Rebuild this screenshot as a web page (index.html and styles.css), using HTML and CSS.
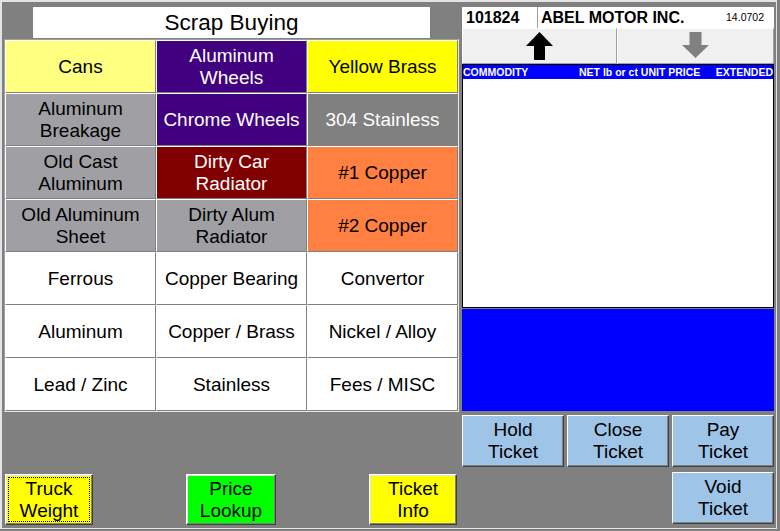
FILE: index.html
```html
<!DOCTYPE html>
<html>
<head>
<meta charset="utf-8">
<link rel="stylesheet" href="styles.css">
</head>
<body>
<div class="window">
  <div class="left">
    <div class="title">Scrap Buying</div>
    <div class="grid">
      <div class="cell c-lyellow">Cans</div>
      <div class="cell c-purple">Aluminum<br>Wheels</div>
      <div class="cell c-yellow">Yellow Brass</div>
      <div class="cell c-gray">Aluminum<br>Breakage</div>
      <div class="cell c-purple">Chrome Wheels</div>
      <div class="cell c-dgray">304 Stainless</div>
      <div class="cell c-gray">Old Cast<br>Aluminum</div>
      <div class="cell c-maroon">Dirty Car<br>Radiator</div>
      <div class="cell c-orange">#1 Copper</div>
      <div class="cell c-gray">Old Aluminum<br>Sheet</div>
      <div class="cell c-gray">Dirty Alum<br>Radiator</div>
      <div class="cell c-orange">#2 Copper</div>
      <div class="cell">Ferrous</div>
      <div class="cell">Copper Bearing</div>
      <div class="cell">Convertor</div>
      <div class="cell">Aluminum</div>
      <div class="cell">Copper / Brass</div>
      <div class="cell">Nickel / Alloy</div>
      <div class="cell">Lead / Zinc</div>
      <div class="cell">Stainless</div>
      <div class="cell">Fees / MISC</div>
    </div>
    <div class="bottom">
      <div class="bbtn c-yellow w88"><span class="focus">Truck<br>Weight</span></div>
      <div class="bbtn c-green w90"><span class="lbl">Price<br>Lookup</span></div>
      <div class="bbtn c-yellow w88"><span class="lbl">Ticket<br>Info</span></div>
    </div>
  </div>
  <div class="right">
    <div class="hdr">
      <div class="num">101824</div>
      <div class="name">ABEL MOTOR INC.</div>
      <div class="ver">14.0702</div>
    </div>
    <div class="arrows">
      <div class="abtn">
        <svg width="27" height="28" viewBox="0 0 27 28"><polygon points="13.5,0 27,14 19,14 19,28 8,28 8,14 0,14" fill="#000"/></svg>
      </div>
      <div class="abtn">
        <svg class="down" width="27" height="26" viewBox="0 0 27 26"><polygon points="7.5,0 19.5,0 19.5,13 27,13 13.5,26 0,13 7.5,13" fill="#808080"/></svg>
      </div>
    </div>
    <div class="list">
      <div class="list-head">
        <span>COMMODITY</span>
        <span>NET lb or ct UNIT PRICE</span>
        <span class="ext">EXTENDED</span>
      </div>
    </div>
    <div class="panel"></div>
    <div class="actions">
      <div class="tbtn">Hold<br>Ticket</div>
      <div class="tbtn">Close<br>Ticket</div>
      <div class="tbtn">Pay<br>Ticket</div>
      <div class="tbtn void">Void<br>Ticket</div>
    </div>
  </div>
</div>
</body>
</html>
```
FILE: styles.css
```css
* { box-sizing: border-box; }
html, body { margin: 0; padding: 0; }
body {
  background: #808080;
  width: 780px;
  height: 531px;
  overflow: hidden;
  font-family: "Liberation Sans", Arial, sans-serif;
  color: #000;
}
.window {
  width: 777px;
  height: 529px;
  border-style: solid;
  border-color: #e4e4e4;
  border-width: 2px 1px 1px 2px;
  padding: 5px 2px 3px 2px;
  display: flex;
  gap: 3px;
  background: #808080;
}
.left {
  width: 455px;
  display: flex;
  flex-direction: column;
}
.title {
  width: 397px;
  height: 31px;
  margin: 0 auto 1px;
  background: #fff;
  font-size: 22.5px;
  display: flex;
  align-items: center;
  justify-content: center;
}
.grid {
  border: 1px solid;
  border-color: #a0a0a0 #e8e8e8 #e8e8e8 #a0a0a0;
  display: grid;
  grid-template-columns: repeat(3, 151px);
  grid-template-rows: repeat(7, 53px);
}
.cell {
  background: #fff;
  border: 1px solid;
  border-color: #fff #808080 #808080 #fff;
  display: flex;
  align-items: center;
  justify-content: center;
  text-align: center;
  font-size: 19px;
  line-height: 22px;
}
.c-lyellow { background: #ffff80; }
.c-yellow { background: #ffff00; }
.c-purple { background: #400080; color: #fff; }
.c-gray { background: #a0a0a4; }
.c-dgray { background: #808080; color: #fff; }
.c-maroon { background: #800000; color: #fff; }
.c-orange { background: #ff8040; }
.c-green { background: #00ff00; }

.bottom {
  margin-top: auto;
  display: flex;
  justify-content: space-between;
  padding: 0 2px 0 1px;
}
.bbtn {
  height: 51px;
  border: 1px solid;
  border-color: #fff #404040 #404040 #fff;
  box-shadow: inset -1px -1px 0 #808080, inset 1px 1px 0 #e3e3e3;
  display: flex;
  align-items: center;
  justify-content: center;
  text-align: center;
  font-size: 19px;
  line-height: 22px;
}
.w88 { width: 88px; }
.w90 { width: 90px; }
.focus {
  align-self: stretch;
  flex: 1;
  margin: 2px;
  border: 1px dotted #000;
  display: flex;
  align-items: center;
  justify-content: center;
}

.right {
  width: 312px;
  display: flex;
  flex-direction: column;
}
.hdr {
  height: 21px;
  background: #fff;
  display: flex;
  align-items: center;
  font-weight: bold;
  font-size: 16px;
}
.hdr .num {
  width: 76px;
  height: 100%;
  padding-left: 4px;
  border-right: 1px solid #a0a0a0;
  display: flex;
  align-items: center;
}
.hdr .name {
  flex: 1;
  padding-left: 3px;
}
.hdr .ver {
  font-weight: normal;
  font-size: 10.5px;
  padding-right: 10px;
  padding-bottom: 2px;
}
.arrows {
  height: 36px;
  display: grid;
  grid-template-columns: 155px 157px;
}
.abtn {
  background: #f0f0f0;
  border: 1px solid;
  border-color: #fff #a0a0a0 #a0a0a0 #fff;
  display: flex;
  align-items: center;
  justify-content: center;
}
.abtn svg { display: block; }
.abtn .down { margin-bottom: 2px; }
.list {
  height: 244px;
  border: 1px solid #000;
  background: #fff;
}
.list-head {
  height: 14px;
  background: #0000ff;
  color: #fff;
  font-weight: bold;
  font-size: 10.5px;
  line-height: 14px;
  display: grid;
  grid-template-columns: 116px auto 1fr;
  white-space: nowrap;
}
.list-head .ext { text-align: right; }
.panel {
  margin-top: 1px;
  height: 102px;
  background: #0000ff;
}
.actions {
  margin-top: 4px;
  display: grid;
  grid-template-columns: repeat(3, 1fr);
  column-gap: 3px;
  row-gap: 5px;
}
.tbtn {
  height: 52px;
  background: #9ec4e8;
  border: 1px solid;
  border-color: #fff #404040 #404040 #fff;
  box-shadow: inset -1px -1px 0 #808080;
  display: flex;
  align-items: center;
  justify-content: center;
  text-align: center;
  font-size: 19px;
  line-height: 22px;
}
.void { grid-column: 3; }
```
